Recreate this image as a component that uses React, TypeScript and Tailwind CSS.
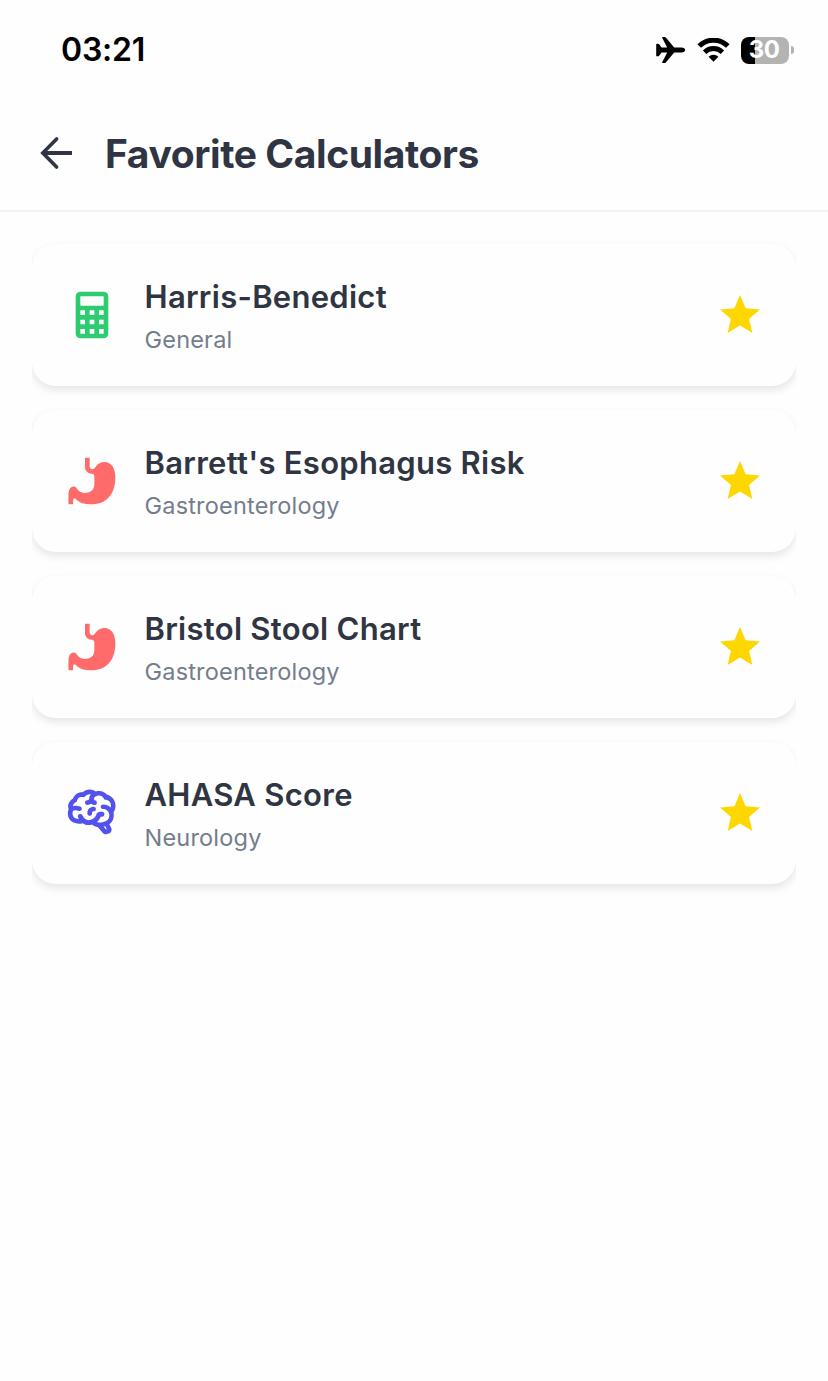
import React from "react";

const STOMACH =
  "M9 2H11V5.6C11 6.6 11.5 7 12.2 7C13.6 7 13.9 3.9 17.3 3.9C20.4 3.9 22 6.6 22 10.6C22 17.4 18.3 22 11.8 22C8.4 22 6.4 21.3 4.7 19.4C4.1 19.4 3.9 19.9 3.9 20.5V22H1.9V18.3C1.9 15.9 2.6 14.4 4.1 14.4C6 14.4 5.5 17.1 8.8 17.1C11.6 17.1 13 15.8 13 13.3V10.2C13 9.2 12.7 9.1 11.8 8.9C10 8.6 9 7.6 9 5.9Z";
const CALCULATOR =
  "M7,2H17A2,2 0 0,1 19,4V20A2,2 0 0,1 17,22H7A2,2 0 0,1 5,20V4A2,2 0 0,1 7,2M7,4V8H17V4H7M7,10V12H9V10H7M11,10V12H13V10H11M15,10V12H17V10H15M7,14V16H9V14H7M11,14V16H13V14H11M15,14V16H17V14H15M7,18V20H9V18H7M11,18V20H13V18H11M15,18V20H17V18H15Z";
const BRAIN =
  "M21.33,12.91C21.42,14.46 20.71,15.95 19.44,16.86L20.21,18.35C20.44,18.8 20.47,19.33 20.27,19.8C20.08,20.27 19.69,20.64 19.21,20.8L18.42,21.05C18.25,21.11 18.06,21.14 17.88,21.14C17.37,21.14 16.89,20.91 16.56,20.5L14.44,18C13.55,17.85 12.71,17.47 12,16.9C11.5,17.05 11,17.13 10.5,17.13C9.62,17.13 8.74,16.86 8,16.34C7.47,16.5 6.93,16.57 6.38,16.56C5.59,16.57 4.81,16.41 4.08,16.11C2.65,15.47 1.7,14.07 1.65,12.5C1.57,11.78 1.69,11.05 2,10.39C1.71,9.64 1.68,8.82 1.93,8.06C2.3,7.11 3,6.32 3.87,5.82C4.45,4.13 6.08,3 7.87,3.12C9.47,1.62 11.92,1.46 13.7,2.75C14.12,2.64 14.56,2.58 15,2.58C16.36,2.55 17.65,3.15 18.5,4.22C20.54,4.75 22,6.57 22.08,8.69C22.13,9.8 21.83,10.89 21.22,11.82C21.29,12.18 21.33,12.54 21.33,12.91M16.33,11.5C16.9,11.57 17.35,12 17.35,12.57A1,1 0 0,1 16.35,13.57H15.72C15.4,14.47 14.84,15.26 14.1,15.86C14.35,15.95 14.61,16 14.87,16.07C20,16 19.4,12.87 19.4,12.82C19.34,11.39 18.14,10.27 16.71,10.33A1,1 0 0,1 15.71,9.33A1,1 0 0,1 16.71,8.33C17.94,8.36 19.12,8.82 20.04,9.63C20.09,9.34 20.12,9.04 20.12,8.74C20.06,7.5 19.5,6.42 17.25,6.21C16,3.25 12.85,4.89 12.85,5.81V5.81C12.82,6.04 13.06,6.53 13.1,6.56A1,1 0 0,1 14.1,7.56C14.1,8.11 13.65,8.56 13.1,8.56V8.56C12.57,8.54 12.07,8.34 11.67,8C11.19,8.31 10.64,8.5 10.07,8.56V8.56C9.5,8.61 9.03,8.21 9,7.66C8.92,7.1 9.33,6.61 9.88,6.56C10.04,6.54 10.82,6.42 10.82,5.79V5.79C10.82,5.13 11.07,4.5 11.5,4C10.58,3.75 9.59,4.08 8.59,5.29C6.75,5 6,5.25 5.45,7.2C4.5,7.67 4,8 3.78,9C4.86,8.78 5.97,8.87 7,9.25C7.5,9.44 7.78,10 7.59,10.54C7.4,11.06 6.82,11.32 6.3,11.13C5.57,10.81 4.75,10.79 4,11.07C3.68,11.34 3.68,11.9 3.68,12.34C3.68,13.08 4.05,13.77 4.68,14.17C5.21,14.44 5.8,14.58 6.39,14.57C6.24,14.31 6.11,14.04 6,13.76C5.81,13.22 6.1,12.63 6.64,12.44C7.18,12.25 7.77,12.54 7.96,13.08C8.36,14.22 9.38,15 10.58,15.13C11.95,15.06 13.17,14.25 13.77,13C14,11.62 15.11,11.5 16.33,11.5M18.33,18.97L17.71,17.67L17,17.83L18,19.08L18.33,18.97M13.68,10.36C13.7,9.83 13.3,9.38 12.77,9.33C12.06,9.29 11.37,9.53 10.84,10C10.27,10.58 9.97,11.38 10,12.19A1,1 0 0,0 11,13.19C11.57,13.19 12,12.74 12,12.19C12,11.92 12.07,11.65 12.23,11.43C12.35,11.33 12.5,11.28 12.66,11.28C13.21,11.31 13.68,10.9 13.68,10.36Z";

type Item = { name: string; category: string; icon: string; color: string };

const items: Item[] = [
  { name: "Harris-Benedict", category: "General", icon: CALCULATOR, color: "text-[#2ecc71]" },
  { name: "Barrett's Esophagus Risk", category: "Gastroenterology", icon: STOMACH, color: "text-[#ff6b6b]" },
  { name: "Bristol Stool Chart", category: "Gastroenterology", icon: STOMACH, color: "text-[#ff6b6b]" },
  { name: "AHASA Score", category: "Neurology", icon: BRAIN, color: "text-[#5352ed]" },
];

function StatusBar() {
  return (
    <div className="flex h-[100px] items-center justify-between pl-[61px] pr-[34px] text-black">
      <span className="text-[32px] font-semibold leading-10 tracking-[-0.2px]">03:21</span>
      <div className="flex items-center">
        <svg className="h-[28px] w-[30px]" viewBox="0 0 30 28" fill="currentColor">
          <path d="M0.2 8.6C0.2 8 0.5 7.7 1 7.7H2C2.5 7.7 2.8 7.9 3.1 8.3L5.6 11.6H11.2L6.3 1.9C6 1.2 6.2 0.9 6.9 0.9H8.5C9.1 0.9 9.5 1.1 9.8 1.5L18.2 11.6H25.4C27.6 11.6 29.2 12.8 29.2 14S27.6 16.4 25.4 16.4H18.2L9.8 26.5C9.5 26.9 9.1 27.1 8.5 27.1H6.9C6.2 27.1 6 26.8 6.3 26.1L11.2 16.4H5.6L3.1 19.7C2.8 20.1 2.5 20.3 2 20.3H1C0.5 20.3 0.2 20 0.2 19.4Z" />
        </svg>
        <svg className="ml-[11px] h-[24px] w-[33px]" viewBox="0 0 33 24" fill="none" stroke="currentColor">
          <path d="M2.2 8.1A20.2 20.2 0 0 1 30.8 8.1" strokeWidth="5" />
          <path d="M7.6 14.2A12.6 12.6 0 0 1 25.4 14.2" strokeWidth="4.8" />
          <path d="M11.6 18.8A6.9 6.9 0 0 1 21.4 18.8L16.5 23.7Z" fill="currentColor" stroke="none" />
        </svg>
        <div className="ml-[11px] flex h-[27px] w-12 items-center justify-center rounded-lg bg-[linear-gradient(90deg,#000_14px,#b3b3b3_14px)] text-[24px] font-bold leading-none text-white">
          <span className="-ml-0.5 tracking-[-0.5px]">30</span>
        </div>
        <div className="ml-0.5 h-2 w-[3px] rounded-r-full bg-[#b3b3b3]" />
      </div>
    </div>
  );
}

function Card({ item }: { item: Item }) {
  return (
    <li className="flex h-[142px] items-center rounded-3xl bg-[#fefefe] px-8 shadow-[0_4px_8px_rgba(0,0,0,0.1)]">
      <svg className={`size-14 shrink-0 ${item.color}`} viewBox="0 0 24 24" fill="currentColor">
        <path d={item.icon} />
      </svg>
      <div className="ml-[24.5px] flex-1 pt-[5px]">
        <h2 className="text-[31px] font-semibold leading-[42px] tracking-[0.28px] text-[#2f3542]">{item.name}</h2>
        <p className="mt-0.5 text-[23.5px] leading-10 tracking-[0.2px] text-[#747d8c]">{item.category}</p>
      </div>
      <svg className="size-12 shrink-0 text-[#ffd700]" viewBox="0 0 24 24" fill="currentColor">
        <path d="M12,17.27L18.18,21L16.54,13.97L22,9.24L14.81,8.62L12,2L9.19,8.62L2,9.24L7.45,13.97L5.82,21L12,17.27Z" />
      </svg>
    </li>
  );
}

export default function App() {
  return (
    <main className="min-h-[1381px] w-full bg-[#fefefe] font-['Inter',sans-serif]">
      <StatusBar />
      <header className="flex h-28 items-center border-b-2 border-[#f1f2f6] pb-1 pl-8">
        <svg className="size-12 text-[#2f3542]" viewBox="0 0 24 24" fill="none" stroke="currentColor" strokeWidth="2">
          <path d="M20 12H5.5" />
          <path d="M12.3 5L5.4 12L12.3 19" strokeLinecap="round" strokeWidth="1.8" />
        </svg>
        <h1 className="ml-[25px] pt-0.5 text-[39px] font-bold leading-12 tracking-[-0.4px] text-[#2f3542]">Favorite Calculators</h1>
      </header>
      <ul className="mx-8 mt-8 flex flex-col gap-6 overflow-x-clip">
        {items.map((item) => (
          <Card key={item.name} item={item} />
        ))}
      </ul>
    </main>
  );
}
